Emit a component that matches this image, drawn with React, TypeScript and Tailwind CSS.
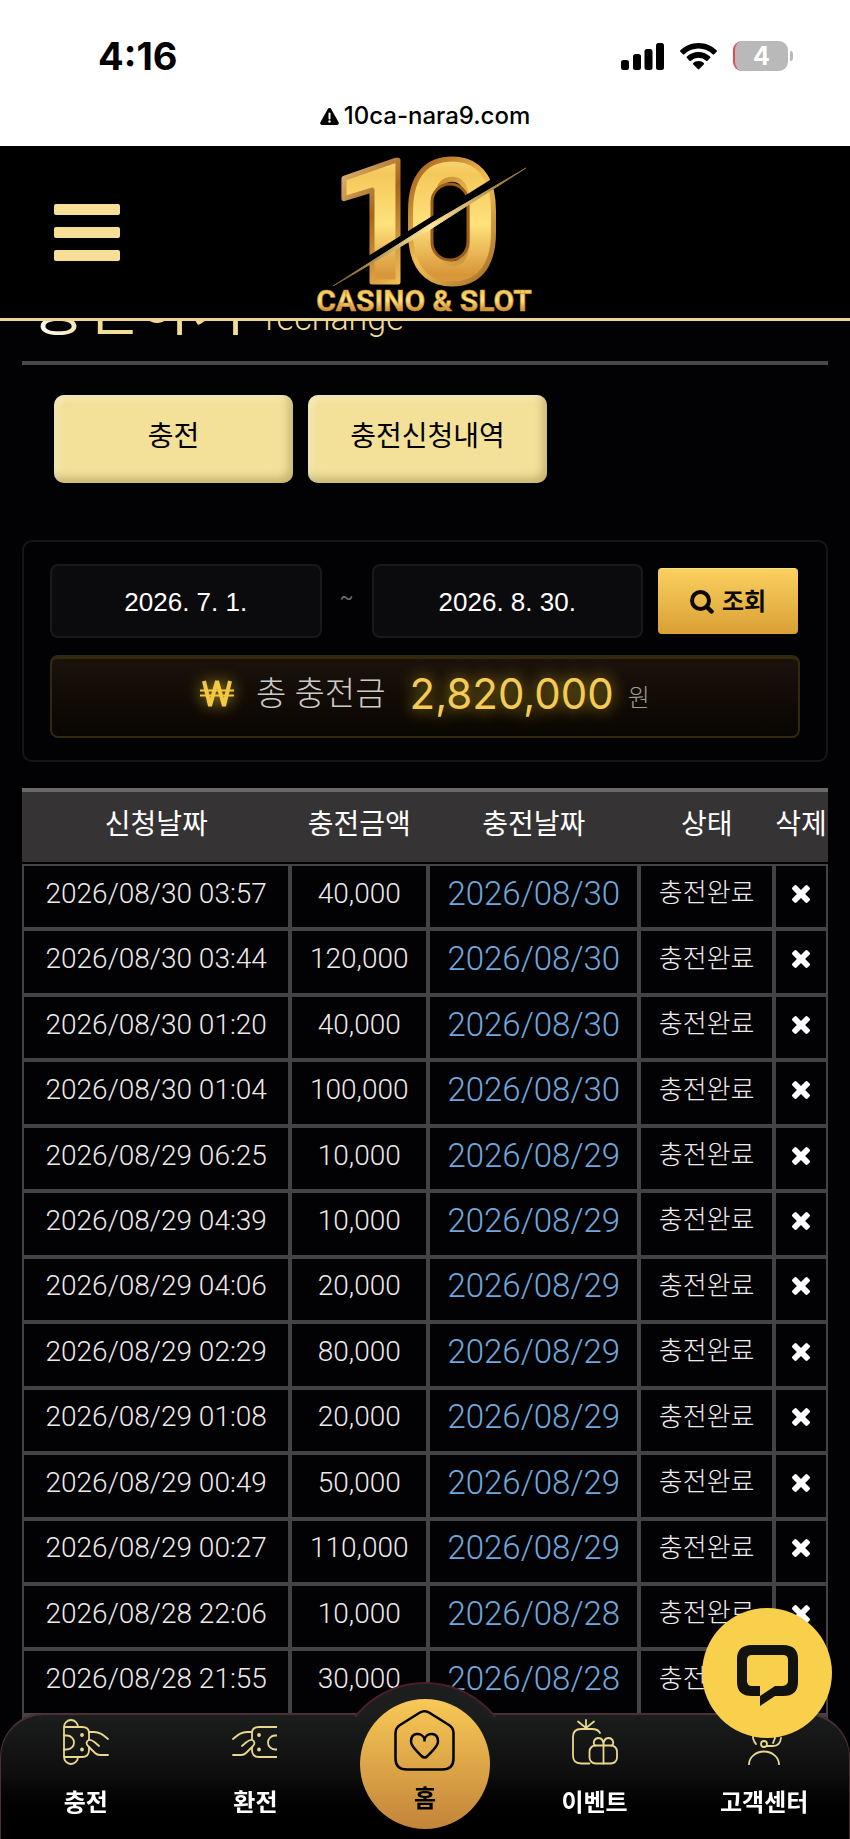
import React from "react";

interface Recharge {
  requestedAt: string;
  amount: string;
  chargedAt: string;
}

const recharges: Recharge[] = [
  { requestedAt: "2026/08/30 03:57", amount: "40,000", chargedAt: "2026/08/30" },
  { requestedAt: "2026/08/30 03:44", amount: "120,000", chargedAt: "2026/08/30" },
  { requestedAt: "2026/08/30 01:20", amount: "40,000", chargedAt: "2026/08/30" },
  { requestedAt: "2026/08/30 01:04", amount: "100,000", chargedAt: "2026/08/30" },
  { requestedAt: "2026/08/29 06:25", amount: "10,000", chargedAt: "2026/08/29" },
  { requestedAt: "2026/08/29 04:39", amount: "10,000", chargedAt: "2026/08/29" },
  { requestedAt: "2026/08/29 04:06", amount: "20,000", chargedAt: "2026/08/29" },
  { requestedAt: "2026/08/29 02:29", amount: "80,000", chargedAt: "2026/08/29" },
  { requestedAt: "2026/08/29 01:08", amount: "20,000", chargedAt: "2026/08/29" },
  { requestedAt: "2026/08/29 00:49", amount: "50,000", chargedAt: "2026/08/29" },
  { requestedAt: "2026/08/29 00:27", amount: "110,000", chargedAt: "2026/08/29" },
  { requestedAt: "2026/08/28 22:06", amount: "10,000", chargedAt: "2026/08/28" },
  { requestedAt: "2026/08/28 21:55", amount: "30,000", chargedAt: "2026/08/28" },
];

// Phone status bar with the address underneath
const StatusBar = () => (
  <div className="h-[146px] bg-white text-black font-['Inter',sans-serif]">
    <div className="flex items-center justify-between pt-8 pl-[98px] pr-[57px]">
      <span className="text-[38px] leading-[48px] font-bold">4:16</span>
      <div className="flex items-center gap-4">
        <svg className="w-[43px] h-[27px]" viewBox="0 0 43 27" aria-hidden="true">
          <rect x="0" y="17" width="8" height="10" rx="2.5" />
          <rect x="12" y="11" width="8" height="16" rx="2.5" />
          <rect x="23.500" y="6" width="8" height="21" rx="2.5" />
          <rect x="35" y="0" width="8" height="27" rx="2.5" />
        </svg>
        <svg className="w-[37px] h-[27px]" viewBox="0 0 37 27" aria-hidden="true">
          <path d="M18.500 0C25.500 0 32 2.800 36.600 7.300a1 1 0 0 1 0 1.400l-2.500 2.600a1 1 0 0 1-1.400 0C29 7.700 24 5.600 18.500 5.600S8 7.700 4.300 11.300a1 1 0 0 1-1.400 0L.4 8.700a1 1 0 0 1 0-1.400C5 2.800 11.500 0 18.500 0Z" />
          <path d="M18.500 9c4.500 0 8.600 1.800 11.600 4.600a1 1 0 0 1 0 1.500l-2.600 2.600a1 1 0 0 1-1.400 0 11.200 11.200 0 0 0-15.200 0 1 1 0 0 1-1.400 0l-2.600-2.600a1 1 0 0 1 0-1.500A16.900 16.900 0 0 1 18.500 9Z" />
          <path d="M18.500 18c2 0 3.800.7 5.200 1.900a1 1 0 0 1 0 1.500l-4.500 4.700a1 1 0 0 1-1.400 0l-4.500-4.700a1 1 0 0 1 0-1.500c1.400-1.200 3.200-1.900 5.200-1.900Z" />
        </svg>
        <div className="flex items-center gap-[2px]">
          <div className="flex h-[30px] w-[55px] items-center justify-center rounded-[9px] border-l-2 border-[#e5484d] bg-[#b9b9b9] text-[25px] leading-none font-bold text-white">
            4
          </div>
          <div className="h-[10px] w-[3px] rounded-r-full bg-[#b9b9b9]" />
        </div>
      </div>
    </div>
    <div className="flex items-center justify-center gap-[5px] pt-5">
      <svg className="w-[19px] h-[17px]" viewBox="0 0 19 17" aria-hidden="true">
        <path d="M7.700 1.200a2 2 0 0 1 3.600 0l7.300 13a1.900 1.900 0 0 1-1.700 2.800H2.100a1.900 1.900 0 0 1-1.700-2.800Z" />
        <path d="M9.500 5.500v5" stroke="#fff" strokeWidth="2" strokeLinecap="round" />
        <circle cx="9.500" cy="13.500" r="1.200" fill="#fff" />
      </svg>
      <span className="text-[24px] leading-8 font-medium">10ca-nara9.com</span>
    </div>
  </div>
);

const Logo = () => (
  <svg className="w-[220px] h-[166px]" viewBox="314 150 220 166" role="img" aria-label="10 Casino & Slot">
    <defs>
      <linearGradient id="gold" x1="0" y1="0" x2="0" y2="1">
        <stop offset="0" stopColor="#fff3b0" />
        <stop offset="0.25" stopColor="#f4c85a" />
        <stop offset="0.5" stopColor="#ffe27c" />
        <stop offset="0.75" stopColor="#d8963a" />
        <stop offset="1" stopColor="#e3a136" />
      </linearGradient>
      <linearGradient id="goldEdge" x1="0" y1="0" x2="1" y2="1">
        <stop offset="0" stopColor="#ffeeb0" />
        <stop offset="0.35" stopColor="#a8651c" />
        <stop offset="0.6" stopColor="#f3bf55" />
        <stop offset="1" stopColor="#7a430f" />
      </linearGradient>
      <linearGradient id="slash" x1="0" y1="0" x2="1" y2="0">
        <stop offset="0" stopColor="#7d5a22" />
        <stop offset="0.5" stopColor="#ffe69a" />
        <stop offset="1" stopColor="#8a6427" />
      </linearGradient>
    </defs>
    <g fontFamily="Roboto, sans-serif" fontWeight="800" fontSize="170" strokeLinejoin="round">
      <text x="329 402" y="283" fill="url(#gold)" stroke="url(#goldEdge)" strokeWidth="5">
        10
      </text>
    </g>
    {/* hollow of the zero with its bevel */}
    <rect x="431" y="185" width="36" height="76" rx="18" fill="#000" stroke="#9a5d1a" strokeWidth="3" />
    <path d="M332 279L524 159V169L332 288Z" fill="#000" />
    <path d="M332 287L430 224.500L525 169L432 228.500Z" fill="url(#slash)" stroke="url(#slash)" strokeWidth="1" />
    <text
      x="423"
      y="312"
      textAnchor="middle"
      fontFamily="Roboto, sans-serif"
      fontWeight="700"
      fontSize="30"
      fill="url(#gold)"
      stroke="#c98f35"
      strokeWidth="0.600"
    >
      CASINO &amp; SLOT
    </text>
  </svg>
);

const WonIcon = () => (
  <svg
    className="w-[34px] h-[28px] text-[#f5c842] drop-shadow-[0_0_8px_rgba(240,200,50,0.7)]"
    viewBox="0 0 34 28"
    fill="none"
    stroke="currentColor"
    aria-hidden="true"
  >
    <path d="M4 1l6 25 7-25 7 25 6-25" strokeWidth="4" strokeLinejoin="bevel" />
    <path d="M0 10.500h34M0 15.500h34" strokeWidth="2" />
  </svg>
);

const SearchIcon = () => (
  <svg className="w-6 h-6" viewBox="0 0 24 24" fill="none" stroke="currentColor" aria-hidden="true">
    <circle cx="10.500" cy="10.500" r="8.500" strokeWidth="4" />
    <path d="M17 17l4.500 4.500" strokeWidth="4.500" strokeLinecap="round" />
  </svg>
);

const DeleteIcon = () => (
  <svg className="w-[18px] h-[18px]" viewBox="302 366 1188 1188" fill="currentColor" aria-hidden="true">
    <path d="M1490 1322q0 40-28 68l-136 136q-28 28-68 28t-68-28l-294-294-294 294q-28 28-68 28t-68-28l-136-136q-28-28-28-68t28-68l294-294-294-294q-28-28-28-68t28-68l136-136q28-28 68-28t68 28l294 294 294-294q28-28 68-28t68 28l136 136q28 28 28 68t-28 68l-294 294 294 294q28 28 28 68z" />
  </svg>
);

const NavIcon = ({ children }: { children: React.ReactNode }) => (
  <svg
    className="w-[46px] h-[46px] text-[#e8d78c]"
    viewBox="0 0 46 46"
    fill="none"
    stroke="currentColor"
    strokeWidth="1.800"
    strokeLinecap="round"
    strokeLinejoin="round"
    aria-hidden="true"
  >
    {children}
  </svg>
);

const ChargeIcon = () => (
  <NavIcon>
    <path d="M1 8a7 7 0 0 1 14 0M1 8v30a7 7 0 0 0 14 0M1 8h18q7 0 7 6M1 38h18q7 0 7-7v-3" />
    <path d="M1 16.500h3a7 7 0 0 1 0 14H1" />
    <path d="M26 14v7" />
    <path d="M26 13h5c6 0 9 3 14 7M36 27l-4-3.500c-2-1.500-4-3-6-2.500c-3 1-3 4-1 6l7 7c1.500 1.500 3 2 5 2h8" />
    <circle cx="19" cy="16" r="1" fill="currentColor" />
    <circle cx="19" cy="30.500" r="1" fill="currentColor" />
  </NavIcon>
);

const WithdrawIcon = () => (
  <NavIcon>
    <path d="M45 8H27q-7 0-7 6v7M45 38H27q-7 0-7-7v-3" strokeLinecap="butt" />
    <path d="M45 16.500h-2a7 7 0 0 0 0 14h2" strokeLinecap="butt" />
    <path d="M20 13h-5c-6 0-9 3-14 7M10 27l4-3.500c2-1.500 4-3 6-2.500c3 1 3 4 1 6l-7 7c-1.500 1.500-3 2-5 2H1" />
    <circle cx="27" cy="16" r="1" fill="currentColor" />
    <circle cx="27" cy="30.500" r="1" fill="currentColor" />
  </NavIcon>
);

const EventIcon = () => (
  <NavIcon>
    <path d="M17.500 44.500H9q-8 0-8-8V18q0-8 8-8h11q6 0 8 4" />
    <path d="M14 9V1M14 9L6 2.500M14 9l8-6.500" />
    <rect x="17.500" y="26.500" width="27.500" height="18" rx="6" />
    <path d="M31.500 26.500v18M31.500 26.500c0-5-2-7.500-5-7.500-5 0-6 6-3 7.500M31.500 26.500c0-5 2-7.500 5-7.500 5 0 6 6 3 7.500" />
  </NavIcon>
);

const SupportIcon = () => (
  <NavIcon>
    <path d="M8 45.500a15 13 0 0 1 30 0" />
    <circle cx="23" cy="25" r="3" />
    <path d="M26 27h6q7 0 8-8M12 19q1 4 3 6M34 19q-1 3-2 5M12 19a11 13 0 0 1 22 0" />
  </NavIcon>
);

const NavItem = ({ icon, label }: { icon: React.ReactNode; label: string }) => (
  <a href="#" className="flex flex-1 flex-col items-center gap-[22px] pt-1">
    {icon}
    <span className="text-[24px] leading-8 font-bold">{label}</span>
  </a>
);

const BottomNav = () => (
  <nav className="fixed inset-x-0 bottom-0 z-20 flex h-[126px] rounded-t-[44px] border-x border-t-2 border-[#4b3137] bg-linear-to-b from-[#1c1d1d] via-[#0d0d0d] via-50% to-black text-white">
    {/* raised bump behind the home button */}
    <div className="absolute -top-[33px] left-1/2 h-[35px] w-[180px] -translate-x-1/2 overflow-hidden">
      <div className="h-[180px] rounded-full border-2 border-[#4b1f29] bg-[#1c1d1d]" />
    </div>
    <NavItem icon={<ChargeIcon />} label="충전" />
    <NavItem icon={<WithdrawIcon />} label="환전" />
    <div className="relative flex flex-1 justify-center">
      <a
        href="#"
        className="absolute -top-4 flex h-[130px] w-[130px] flex-col items-center gap-3 rounded-full bg-linear-to-b from-[#f8c956] to-[#c3843a] pt-[11px] text-black"
      >
        <svg className="w-[61px] h-[61px]" viewBox="0 0 61 61" fill="none" stroke="currentColor" strokeWidth="2.500" strokeLinejoin="round" aria-hidden="true">
          <path d="M26 2.500L6 15Q1.500 18 1.500 23v25.500Q1.500 59.500 13 59.500h35q11.500 0 11.500-11V23q0-5-4.500-8L35 2.500q-4.500-2.500-9 0Z" />
          <path d="M30.500 31.500V29C28 22 17 22 17 31.500c0 5 6 9.500 10.500 14.500q3 3 6 0C38 41 44 36.500 44 31.500 44 22 33 22 30.500 29" />
        </svg>
        <span className="text-[24px] leading-8 font-bold">홈</span>
      </a>
    </div>
    <NavItem icon={<EventIcon />} label="이벤트" />
    <NavItem icon={<SupportIcon />} label="고객센터" />
  </nav>
);

const dateInput =
  "h-[74px] min-w-0 flex-1 rounded-lg border-2 border-[#19191b] bg-[#0b0a0c] pt-[2px] text-center text-[26px] text-white font-['Liberation_Sans',sans-serif]";
const tabButton =
  "h-[88px] w-[239px] rounded-[10px] bg-[#f3e19a] pb-1 text-[28px] text-black shadow-[inset_-4px_-5px_8px_rgba(90,75,20,0.3),inset_3px_3px_6px_rgba(255,255,255,0.4)]";
const cell = "border-2 border-[#454246] px-0 pb-[6px] text-center";
const koreanCell = "border-2 border-[#454246] px-0 pb-[6px] text-center text-[26px]";

const App = () => {
  return (
    <div className="min-h-screen bg-[#020103] text-white font-['Roboto','Noto_Sans_CJK_KR',sans-serif]">
      <StatusBar />

      <header className="relative z-10 flex h-[175px] items-center border-b-[3px] border-[#eed596] bg-black">
        <button type="button" aria-label="메뉴" className="ml-[54px] flex w-[66px] flex-col gap-3">
          <span className="h-[11px] rounded-[2px] bg-[#f7df98]" />
          <span className="h-[11px] rounded-[2px] bg-[#f7df98]" />
          <span className="h-[11px] rounded-[2px] bg-[#f7df98]" />
        </button>
        <div className="flex flex-1 justify-center pr-[120px]">
          <Logo />
        </div>
      </header>

      <main className="px-[22px]">
        <div className="-mt-[43px] flex h-[87px] items-baseline gap-5 border-b-4 border-[#47464a] pl-[10px]">
          <h1 className="bg-linear-to-r from-white to-[#f1dc98] to-30% bg-clip-text text-[58px] leading-[64px] text-transparent">
            충전하기
          </h1>
          <span className="text-[34px] leading-[40px] font-light text-[#f1dc98]">rechange</span>
        </div>

        <div className="flex gap-[15px] px-8 pt-[30px]">
          <button type="button" className={tabButton}>충전</button>
          <button type="button" className={tabButton}>충전신청내역</button>
        </div>

        <section className="mt-[57px] rounded-[10px] border-2 border-[#161518] px-[26px] pt-[22px] pb-[22px]">
          <form className="flex items-center" onSubmit={(e) => e.preventDefault()}>
            <input type="text" aria-label="시작일" defaultValue="2026. 7. 1." className={dateInput} />
            <span className="w-[50px] pb-2 text-center text-[20px] text-[#6d6c70]">~</span>
            <input type="text" aria-label="종료일" defaultValue="2026. 8. 30." className={dateInput} />
            <button
              type="submit"
              className="mr-[2px] ml-[15px] flex h-[66px] w-[140px] items-center justify-center gap-2 rounded-[4px] border-t border-[#ffe08a] bg-linear-to-b from-[#fad05f] to-[#d9a034] text-[24px] font-bold text-[#0c0a06]"
            >
              <SearchIcon />
              조회
            </button>
          </form>

          <div className="mt-[17px] flex h-[83px] items-center justify-center rounded-lg border-2 border-t-4 border-[#31280f] bg-linear-to-b from-[#1b120c] to-[#090602] pb-2">
            <WonIcon />
            <span className="ml-[22px] text-[33px] font-light text-[#cfcac8]">총 충전금</span>
            <strong className="ml-6 text-[42px] leading-[56px] font-normal text-[#f3cb55] [text-shadow:0_0_16px_rgba(240,200,40,0.8)] font-['Inter',sans-serif]">
              2,820,000
            </strong>
            <span className="ml-[14px] pt-2 text-[24px] font-light text-[#a39b8e]">원</span>
          </div>
        </section>

        <table className="mt-[26px] h-[992px] w-full table-fixed border-separate border-spacing-0">
          <colgroup>
            <col className="w-[33.3%]" />
            <col className="w-[17.1%]" />
            <col className="w-[26.2%]" />
            <col className="w-[16.7%]" />
            <col className="w-[6.7%]" />
          </colgroup>
          <thead>
            <tr className="h-[76px] text-[28px] whitespace-nowrap [&>th]:border-t-4 [&>th]:border-b-2 [&>th]:border-t-[#6a686b] [&>th]:border-b-black [&>th]:bg-[#363335] [&>th]:p-0 [&>th]:pb-1 [&>th]:font-normal">
              <th>신청날짜</th>
              <th>충전금액</th>
              <th>충전날짜</th>
              <th>상태</th>
              <th>삭제</th>
            </tr>
          </thead>
          <tbody>
            {recharges.map((item) => (
              <tr key={item.requestedAt} className="text-[28px] font-light text-[#eeeaec]">
                <td className={cell}>{item.requestedAt}</td>
                <td className={cell}>{item.amount}</td>
                <td className={`${cell} text-[33px] leading-10 text-[#6fa8dc]`}>{item.chargedAt}</td>
                <td className={koreanCell}>충전완료</td>
                <td className={cell}>
                  <button type="button" aria-label="삭제" className="flex w-full justify-center text-white">
                    <DeleteIcon />
                  </button>
                </td>
              </tr>
            ))}
            <tr className="h-[65px]">
              <td className={cell} />
              <td className={cell} />
              <td className={cell} />
              <td className={cell} />
              <td className={cell} />
            </tr>
          </tbody>
        </table>
      </main>

      <BottomNav />

      <button
        type="button"
        aria-label="채팅 상담"
        className="fixed right-[18px] bottom-[101px] z-30 flex h-[130px] w-[130px] items-center justify-center rounded-full bg-[#f8d04b] pt-1 text-[#12120f]"
      >
        <svg className="w-[61px] h-[61px]" viewBox="0 0 61 61" fill="currentColor" fillRule="evenodd" aria-hidden="true">
          <path d="M23 61V51H15Q0 51 0 37V14Q0 0 15 0H46Q61 0 61 14V37Q61 51 46 51H38ZM23 51L38 41H46Q51 40 51 36V15Q51 10 46 10H15Q10 10 10 15V36Q10 41 15 41H23Z" />
        </svg>
      </button>
    </div>
  );
};

export default App;
